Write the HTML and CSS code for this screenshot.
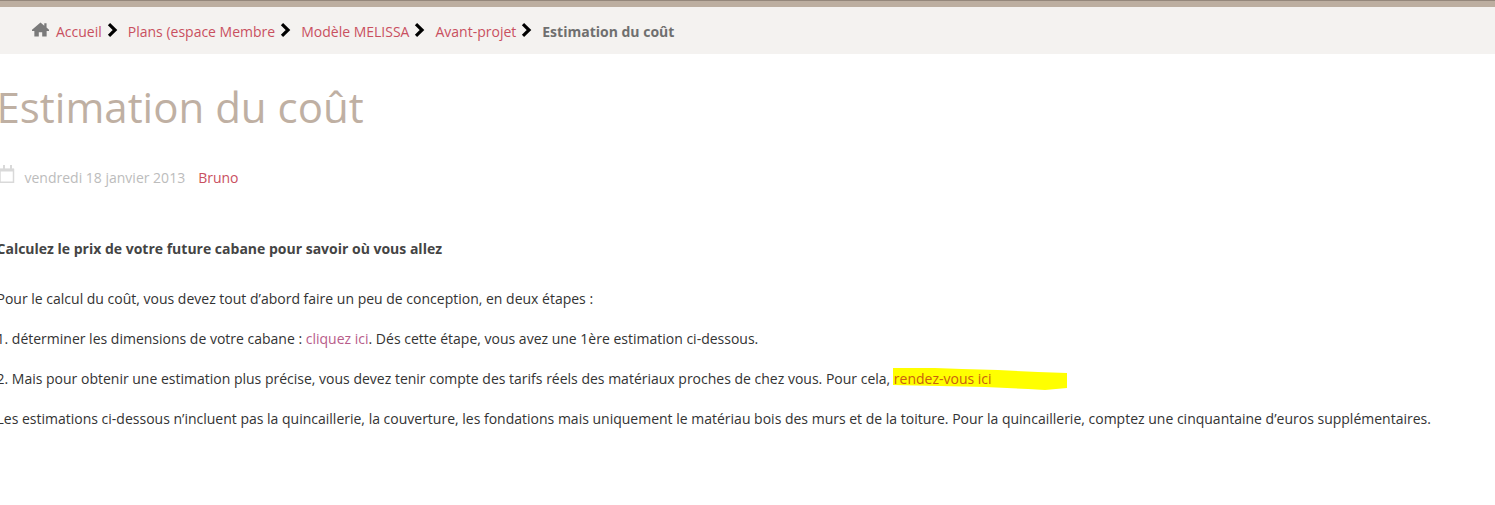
FILE: index.html
```html
<!DOCTYPE html>
<html lang="fr">
<head>
    <meta charset="UTF-8">
    <title>Estimation du coût</title>
    <link rel="stylesheet" href="styles.css">
</head>
<body>
    <div class="topbar"></div>
    <div class="breadcrumb">
        <svg class="home-icon" width="17" height="15" viewBox="0 0 18 15"><path fill="#7a7a7a" d="M9 0 L13 3.4 V1 H15.4 V5.5 L18 7.8 V9 H15.5 V15 H10.8 V10.5 H7.2 V15 H2.5 V9 H0 V7.8 Z"/></svg>
        <a href="#">Accueil</a>
        <svg class="sep" width="11" height="14" viewBox="0 0 11 14"><path fill="none" stroke="#000" stroke-width="3.2" d="M2 1.2 L8 7 L2 12.8"/></svg>
        <a href="#">Plans (espace Membre</a>
        <svg class="sep" width="11" height="14" viewBox="0 0 11 14"><path fill="none" stroke="#000" stroke-width="3.2" d="M2 1.2 L8 7 L2 12.8"/></svg>
        <a href="#">Modèle MELISSA</a>
        <svg class="sep" width="11" height="14" viewBox="0 0 11 14"><path fill="none" stroke="#000" stroke-width="3.2" d="M2 1.2 L8 7 L2 12.8"/></svg>
        <a href="#">Avant-projet</a>
        <svg class="sep" width="11" height="14" viewBox="0 0 11 14"><path fill="none" stroke="#000" stroke-width="3.2" d="M2 1.2 L8 7 L2 12.8"/></svg>
        <strong>Estimation du coût</strong>
    </div>

    <div class="content">
        <h1>Estimation du coût</h1>

        <div class="meta">
            <svg class="cal-icon" width="18" height="18" viewBox="0 0 18 18"><path fill="none" stroke="#d9d9d9" stroke-width="1.5" d="M3 4.5 H16.5 V17.2 H3 Z"/><path fill="#d9d9d9" d="M3 3.5 H17 V6.5 H3 Z M6 0 H8 V4 H6 Z M13 0 H15 V4 H13 Z"/></svg>
            <span class="date">vendredi 18 janvier 2013</span>
            <a href="#">Bruno</a>
        </div>

        <p class="lead"><strong>Calculez le prix de votre future cabane pour savoir où vous allez</strong></p>
        <p>Pour le calcul du coût, vous devez tout d’abord faire un peu de conception, en deux étapes :</p>
        <p>1. déterminer les dimensions de votre cabane : <a class="link" href="#">cliquez ici</a>. Dés cette étape, vous avez une 1ère estimation ci-dessous.</p>
        <p>2. Mais pour obtenir une estimation plus précise, vous devez tenir compte des tarifs réels des matériaux proches de chez vous. Pour cela, <a class="marked" href="#"><svg class="marker" width="175" height="23" viewBox="0 0 175 23"><path fill="#ffff00" d="M0 0 H42 L69 1 L105 2 L145 4 L174 5 V20 L152 22 L135 21 L92 19 L0 17 Z"/></svg>rendez-vous ici</a></p>
        <p>Les estimations ci-dessous n’incluent pas la quincaillerie, la couverture, les fondations mais uniquement le matériau bois des murs et de la toiture. Pour la quincaillerie, comptez une cinquantaine d’euros supplémentaires.</p>
    </div>
</body>
</html>
```

FILE: styles.css
```css
body {
    margin: 0;
    background: white;
    font-family: "Open Sans", "Noto Sans", sans-serif;
    font-size: 14px;
    color: #333;
}
a { text-decoration: none; color: #c9505f; }
.topbar {
    height: 6px;
    background: #bcaea0;
    border-top: 1px solid #94877b;
}
.breadcrumb {
    display: flex;
    align-items: center;
    height: 45px;
    padding-top: 2px;
    padding-left: 32px;
    background: #f4f2f0;
}
.breadcrumb a { color: #c9505f; }
.breadcrumb strong { color: #6f6f6f; font-weight: 700; }
.home-icon { margin-right: 7px; margin-top: -5px; }
.sep { margin: -4px 10px 0 5px; }
.content { margin-left: -3.5px; }
h1 {
    margin: 24px 0 0;
    font-size: 42px;
    line-height: 58px;
    font-weight: 400;
    color: #bfb0a3;
}
.meta {
    display: flex;
    align-items: center;
    margin-top: 29px;
    height: 24px;
    color: #bcbcbc;
}
.meta a { margin-left: 13px; }
.cal-icon { margin-right: 10px; margin-top: -6px; }
p { margin: 0 0 21px; line-height: 19px; }
.lead { margin-top: 50px; margin-bottom: 31px; color: #444; }
.link { color: #b85c8a; }
.marked {
    position: relative;
    color: #c9600f;
}
.marker {
    position: absolute;
    left: -1px;
    top: -1px;
    z-index: -1;
}
```
